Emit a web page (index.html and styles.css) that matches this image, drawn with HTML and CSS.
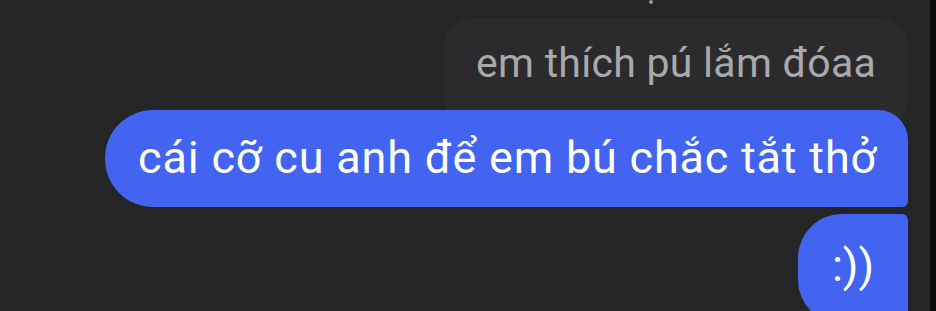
FILE: index.html
```html
<!DOCTYPE html>
<html lang="vi">
<head>
<meta charset="utf-8">
<link rel="stylesheet" href="styles.css">
</head>
<body>
<div class="screen">
  <div class="chat">
    <div class="top-dot"></div>
    <div class="reply">em thích pú lắm đóaa</div>
    <div class="bubble first">cái cỡ cu anh để em bú chắc tắt thở</div>
    <div class="bubble last">:))</div>
  </div>
  <div class="edge"></div>
</div>
</body>
</html>
```
FILE: styles.css
```css
html, body {
  margin: 0;
  padding: 0;
  background: #252527;
  overflow: hidden;
}
.screen {
  display: flex;
  width: 936px;
  height: 311px;
  overflow: hidden;
}
.chat {
  flex: 1;
  display: flex;
  flex-direction: column;
  align-items: flex-end;
  padding-right: 22px;
  font-family: Roboto, "Noto Sans", sans-serif;
  position: relative;
}
.chat > div {
  flex-shrink: 0;
}
.edge {
  width: 6px;
  background: #0b0b0c;
}
.top-dot {
  position: absolute;
  left: 649px;
  top: 0;
  width: 4px;
  height: 4px;
  border-radius: 50%;
  background: #9a9a9c;
}
.reply {
  margin-top: 18px;
  box-sizing: border-box;
  width: 464px;
  height: 110px;
  margin-bottom: -18px;
  padding: 21px 32px 0 0;
  border-radius: 30px;
  background: #2b2b2d;
  color: #a9a9ab;
  font-size: 41px;
  letter-spacing: 0.25px;
  text-align: right;
}
.bubble {
  position: relative;
  box-sizing: border-box;
  background: #4264f0;
  color: #ffffff;
  font-size: 45px;
}
.first {
  height: 97px;
  padding: 21px 31px 0 33px;
  letter-spacing: 0.8px;
  border-radius: 48px 30px 6px 48px;
}
.last {
  margin-top: 7px;
  width: 110px;
  height: 110px;
  padding-top: 25px;
  text-align: center;
  border-radius: 44px 6px 6px 44px;
}
```
